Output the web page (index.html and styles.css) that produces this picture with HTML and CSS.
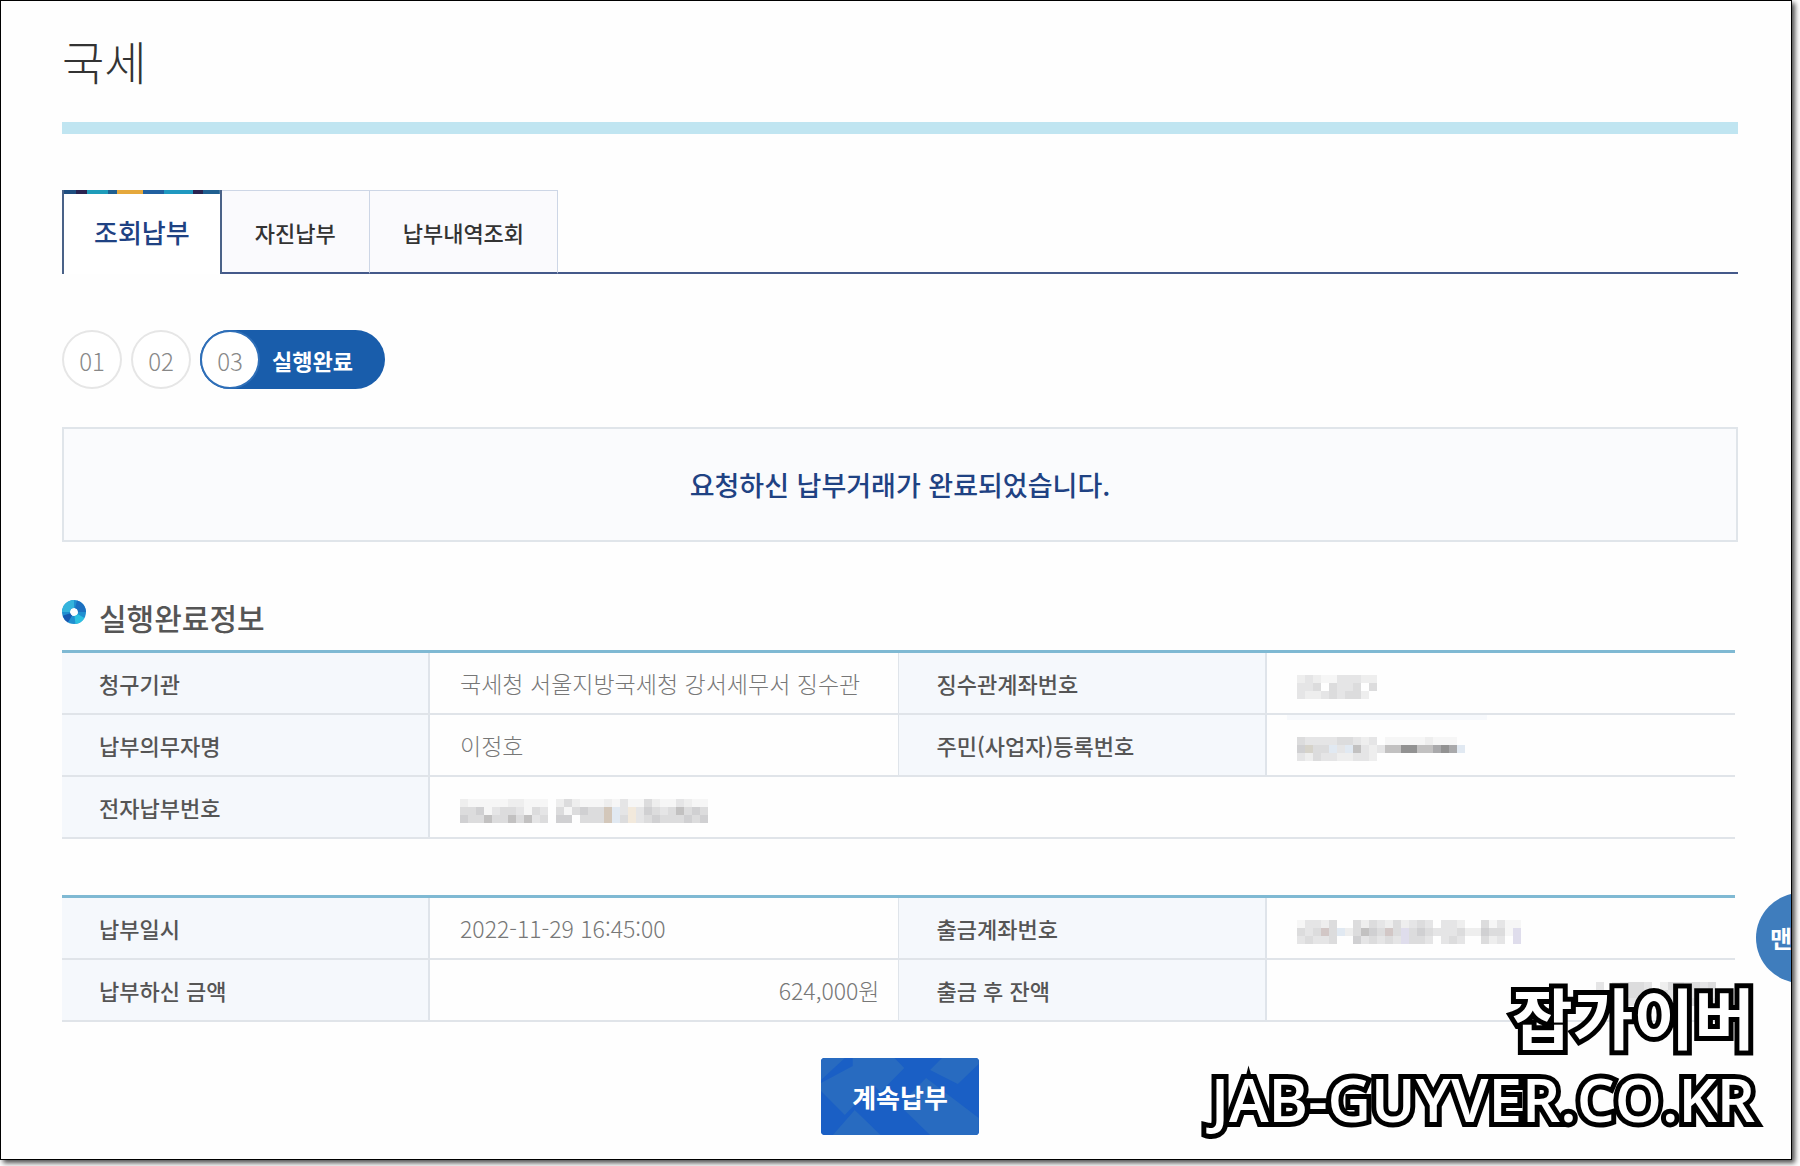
FILE: index.html
```html
<!DOCTYPE html>
<html lang="ko">
<head>
<meta charset="utf-8">
<title>국세</title>
<meta name="viewport" content="width=device-width, initial-scale=1">
<link rel="stylesheet" href="styles.css">
</head>
<body>
<div class="frame">
  <main class="content">
    <h1 class="page-title">국세</h1>

    <nav class="tabs">
      <a class="tab tab-active" href="#lookup">조회납부</a>
      <a class="tab" href="#voluntary">자진납부</a>
      <a class="tab" href="#history">납부내역조회</a>
      <span class="tabs-rest"></span>
    </nav>

    <ol class="steps">
      <li class="step">01</li>
      <li class="step">02</li>
      <li class="step-current"><span class="step-number">03</span><span class="step-label">실행완료</span></li>
    </ol>

    <p class="notice">요청하신 납부거래가 완료되었습니다.</p>

    <h2 class="section-title">
      <svg class="bullet" viewBox="0 0 24 24" aria-hidden="true">
        <circle cx="12" cy="12" r="8" fill="none" stroke="#1f8fd0" stroke-width="8"/>
        <path d="M12 4A8 8 0 0 0 4 12" fill="none" stroke="#35b4dc" stroke-width="8"/>
        <path d="M14 4.300A8 8 0 0 1 20 12" fill="none" stroke="#1c6fc0" stroke-width="8"/>
        <path d="M19 16A8 8 0 0 1 13 20" fill="none" stroke="#2cc0e0" stroke-width="8"/>
        <path d="M8 19A8 8 0 0 1 4.500 14.500" fill="none" stroke="#1758b0" stroke-width="8"/>
      </svg>
      실행완료정보
    </h2>

    <table class="info">
      <colgroup><col class="col-head"><col class="col-data"><col class="col-head"><col class="col-data"></colgroup>
      <tbody>
        <tr>
          <th scope="row">청구기관</th>
          <td>국세청 서울지방국세청 강서세무서 징수관</td>
          <th scope="row">징수관계좌번호</th>
          <td><svg class="mosaic" data-rows="2321133322 334.4334.4 322343442."></svg></td>
        </tr>
        <tr>
          <th scope="row">납부의무자명</th>
          <td>이정호</td>
          <th scope="row">주민(사업자)등록번호</th>
          <td class="patched"><svg class="mosaic" data-rows="4333344323.111112111. 5g44b3b632266886678 7b 3243322332..........."></svg></td>
        </tr>
        <tr>
          <th scope="row">전자납부번호</th>
          <td colspan="3"><svg class="mosaic" data-rows="21111122111.2421112131142113211 44513443143.4145 44tb3y35434646 4 54 46b4646 34.55.444tb4y3454445 45"></svg></td>
        </tr>
      </tbody>
    </table>

    <table class="info">
      <colgroup><col class="col-head"><col class="col-data"><col class="col-head"><col class="col-data"></colgroup>
      <tbody>
        <tr>
          <th scope="row">납부일시</th>
          <td>2022-11-29 16:45:00</td>
          <th scope="row">출금계좌번호</th>
          <td><svg class="mosaic" data-rows="13324..42432423 43.332..4131 1"></svg></td>
        </tr>
        <tr>
          <th scope="row">납부하신 금액</th>
          <td class="amount">624,000원</td>
          <th scope="row">출금 후 잔액</th>
          <td class="amount"><svg class="mosaic" data-rows="3.2343.33434343"></svg></td>
        </tr>
      </tbody>
    </table>

    <div class="actions">
      <button class="primary" type="button">
        <svg class="primary-pattern" viewBox="0 0 159 77" preserveAspectRatio="none" aria-hidden="true">
          <rect width="159" height="77" fill="#1a5fc5"/>
          <g fill="#286bc0">
            <path d="M32 0H74L84 10 60 34 53 27 24 57 0 33V25L32 8Z"/>
            <path d="M110 12L122 0H159V6L138 26Z"/>
            <path d="M0 0H24L0 22Z"/>
            <path d="M84 42L106 20 159 60V77H110L84 52Z"/>
            <path d="M12 77L34 52 60 77Z"/>
          </g>
        </svg>
        <span class="primary-label">계속납부</span>
      </button>
    </div>
  </main>

  <button class="floating" type="button">맨</button>
  <div class="watermark"><span class="watermark-name">잡가이버</span><span class="watermark-site">JAB-GUYVER.CO.KR</span></div>
</div>
<script src="mosaic.js"></script>
</body>
</html>
```
FILE: styles.css
```css
* {
  box-sizing: border-box;
}

body {
  margin: 0;
  padding: 0 8px 8px 0;
  min-height: 100vh;
  display: flex;
  background: #fff;
  color: #555;
  font-family: "Noto Sans CJK KR", sans-serif;
  font-size: 22px;
  line-height: 32px;
}

.frame {
  flex: 1;
  position: relative;
  overflow: hidden;
  border: 1px solid #000;
  background: #fefefe;
  box-shadow: 3px 3px 5px rgba(0, 0, 0, 0.7);
}

.content {
  padding: 0 53px 24px 61px;
}

.page-title {
  margin: 0 0 56px;
  padding: 25px 0 28px;
  border-bottom: 12px solid #c0e5f1;
  color: #333;
  font-size: 46px;
  font-weight: 300;
  line-height: 68px;
}

.tabs {
  display: flex;
  height: 84px;
}

.tab {
  display: flex;
  align-items: center;
  padding: 0 33px;
  border: 1px solid #cdd6e6;
  border-left: 0;
  border-bottom: 2px solid #44598a;
  background: #fafafd;
  color: #333;
  font-weight: 500;
  text-decoration: none;
}

.tab-active {
  padding: 0 30px;
  border: 2px solid #4a6288;
  border-width: 0 2px;
  background:
    linear-gradient(90deg, #1f4e80 0 8%, #2a2350 8% 15%, #1e9cba 15% 28%, #1f5f90 28% 34%, #e5a83c 34% 51%, #2160a0 51% 64%, #1f98c0 64% 83%, #2a2350 83% 89%, #1f5f90 89%) top / 100% 4px no-repeat,
    #fff;
  color: #1f4283;
  font-size: 26px;
}

.tabs-rest {
  flex: 1;
  border-bottom: 2px solid #44598a;
}

.steps {
  display: flex;
  gap: 9px;
  margin: 56px 0 38px;
  padding: 0;
  list-style: none;
}

.step,
.step-number {
  width: 60px;
  height: 59px;
  border: 2px solid #e6e6e6;
  border-radius: 50%;
  background: #fff;
  color: #888;
  font-size: 24px;
  font-weight: 300;
  line-height: 58px;
  text-align: center;
}

.step-current {
  display: flex;
  align-items: center;
  padding-right: 32px;
  border-radius: 30px;
  background: #195dab;
}

.step-number {
  border-color: #2f6fb8;
}

.step-label {
  padding-left: 12px;
  color: #fff;
  font-weight: 700;
}

.notice {
  margin: 0 0 55px;
  padding: 38px 0 37px;
  border: 2px solid #e0e5ea;
  background: #fafbfd;
  color: #1f4283;
  font-size: 27px;
  font-weight: 500;
  line-height: 36px;
  text-align: center;
}

.section-title {
  display: flex;
  gap: 13px;
  margin: 0 0 13px;
  color: #555;
  font-size: 30px;
  font-weight: 500;
  line-height: 40px;
}

.bullet {
  width: 24px;
  height: 24px;
  margin-top: 3px;
}

.info {
  width: calc(100% - 3px);
  margin-bottom: 56px;
  border-collapse: separate;
  border-spacing: 0;
  border-top: 3px solid #7fb9d3;
  table-layout: fixed;
}

.info:last-of-type {
  margin-bottom: 36px;
}

.col-head {
  width: 22%;
}

.col-data {
  width: 28%;
}

.info th,
.info td {
  height: 62px;
  padding: 0 0 0 30px;
  border-bottom: 2px solid #e0e4e9;
  text-align: left;
}

.info th {
  padding-left: 37px;
  border-right: 2px solid #dfe4ea;
  background: #f5f8fc;
  color: #555;
  font-weight: 500;
}

.info td + th {
  border-left: 1px solid #dfe4ea;
}

.info td {
  color: #777;
  font-size: 23px;
  font-weight: 300;
}

.info .amount {
  padding-right: 19px;
  text-align: right;
}

.info .patched {
  background: linear-gradient(#f7f9fc, #f7f9fc) 20px 0 / 200px 5px no-repeat;
}

.mosaic {
  display: inline-block;
  vertical-align: middle;
}

.actions {
  display: flex;
  justify-content: center;
}

.primary {
  position: relative;
  overflow: hidden;
  height: 77px;
  padding: 0 31px;
  border: 0;
  border-radius: 4px;
  background: #1a5fc5;
  color: #fff;
  font: 700 26px/40px "Noto Sans CJK KR", sans-serif;
}

.primary-pattern {
  position: absolute;
  inset: 0;
  width: 100%;
  height: 100%;
}

.primary-label {
  position: relative;
}

.floating {
  position: absolute;
  right: -55px;
  bottom: 176px;
  width: 90px;
  height: 90px;
  padding: 0 0 0 14px;
  border: 0;
  border-radius: 50%;
  background: #3f7dbd;
  color: #fff;
  font: 700 24px/32px "Noto Sans CJK KR", sans-serif;
  text-align: left;
}

.watermark {
  position: absolute;
  right: 36px;
  bottom: 18px;
  display: flex;
  flex-direction: column;
  align-items: flex-end;
  color: #fff;
  font-weight: 700;
  line-height: 84px;
  -webkit-text-stroke: 10px #000;
  paint-order: stroke fill;
  stroke-linejoin: round;
  pointer-events: none;
}

.watermark-name {
  font-size: 66px;
}

.watermark-site {
  font-family: "Open Sans", "Noto Sans", sans-serif;
  font-size: 60px;
  font-weight: 600;
}
```
FILE: mosaic.js
```javascript
// Draws the pixelated masks over private values: one 8px cell per character.
const tones = {
  1: "#f6f6f6", 2: "#eeeeee", 3: "#e5e5e6", 4: "#dcdcdd", 5: "#d0d0d2",
  6: "#c2c1c1", 7: "#a9a9ab", 8: "#929292",
  b: "#e1e9f2", t: "#d3c7ba", y: "#f2e9dc", p: "#dfddec", r: "#d2c7c6", g: "#d6d3ca"
};
const cell = 8;

const masks = [
  ["2321133322", "334.4334.4", "322343442."],
  ["4333344323.111112111.", "5g44b3b6323668866787b", "3243322332..........."],
  ["21111122111.2421112131142113211", "44513443143.414544tb3y354346454", "54464464634.55.444tb4y345444545"],
  ["13324..424324234 3.332..41311".replace(" ", ""), "434r4b24654r4p4543334225441p", "34334..534343p443.343..423.p"],
  ["3.23443.2443434", "3.34443.4344343", "3.34343.4343444"]
];

document.querySelectorAll(".mosaic").forEach((svg, index) => {
  const rows = masks[index];
  svg.removeAttribute("data-rows");
  svg.setAttribute("width", rows[0].length * cell);
  svg.setAttribute("height", rows.length * cell);
  rows.forEach((row, y) => {
    [...row].forEach((key, x) => {
      if (!tones[key]) return;
      const rect = document.createElementNS("http://www.w3.org/2000/svg", "rect");
      rect.setAttribute("x", x * cell);
      rect.setAttribute("y", y * cell);
      rect.setAttribute("width", cell);
      rect.setAttribute("height", cell);
      rect.setAttribute("fill", tones[key]);
      svg.appendChild(rect);
    });
  });
});
```
